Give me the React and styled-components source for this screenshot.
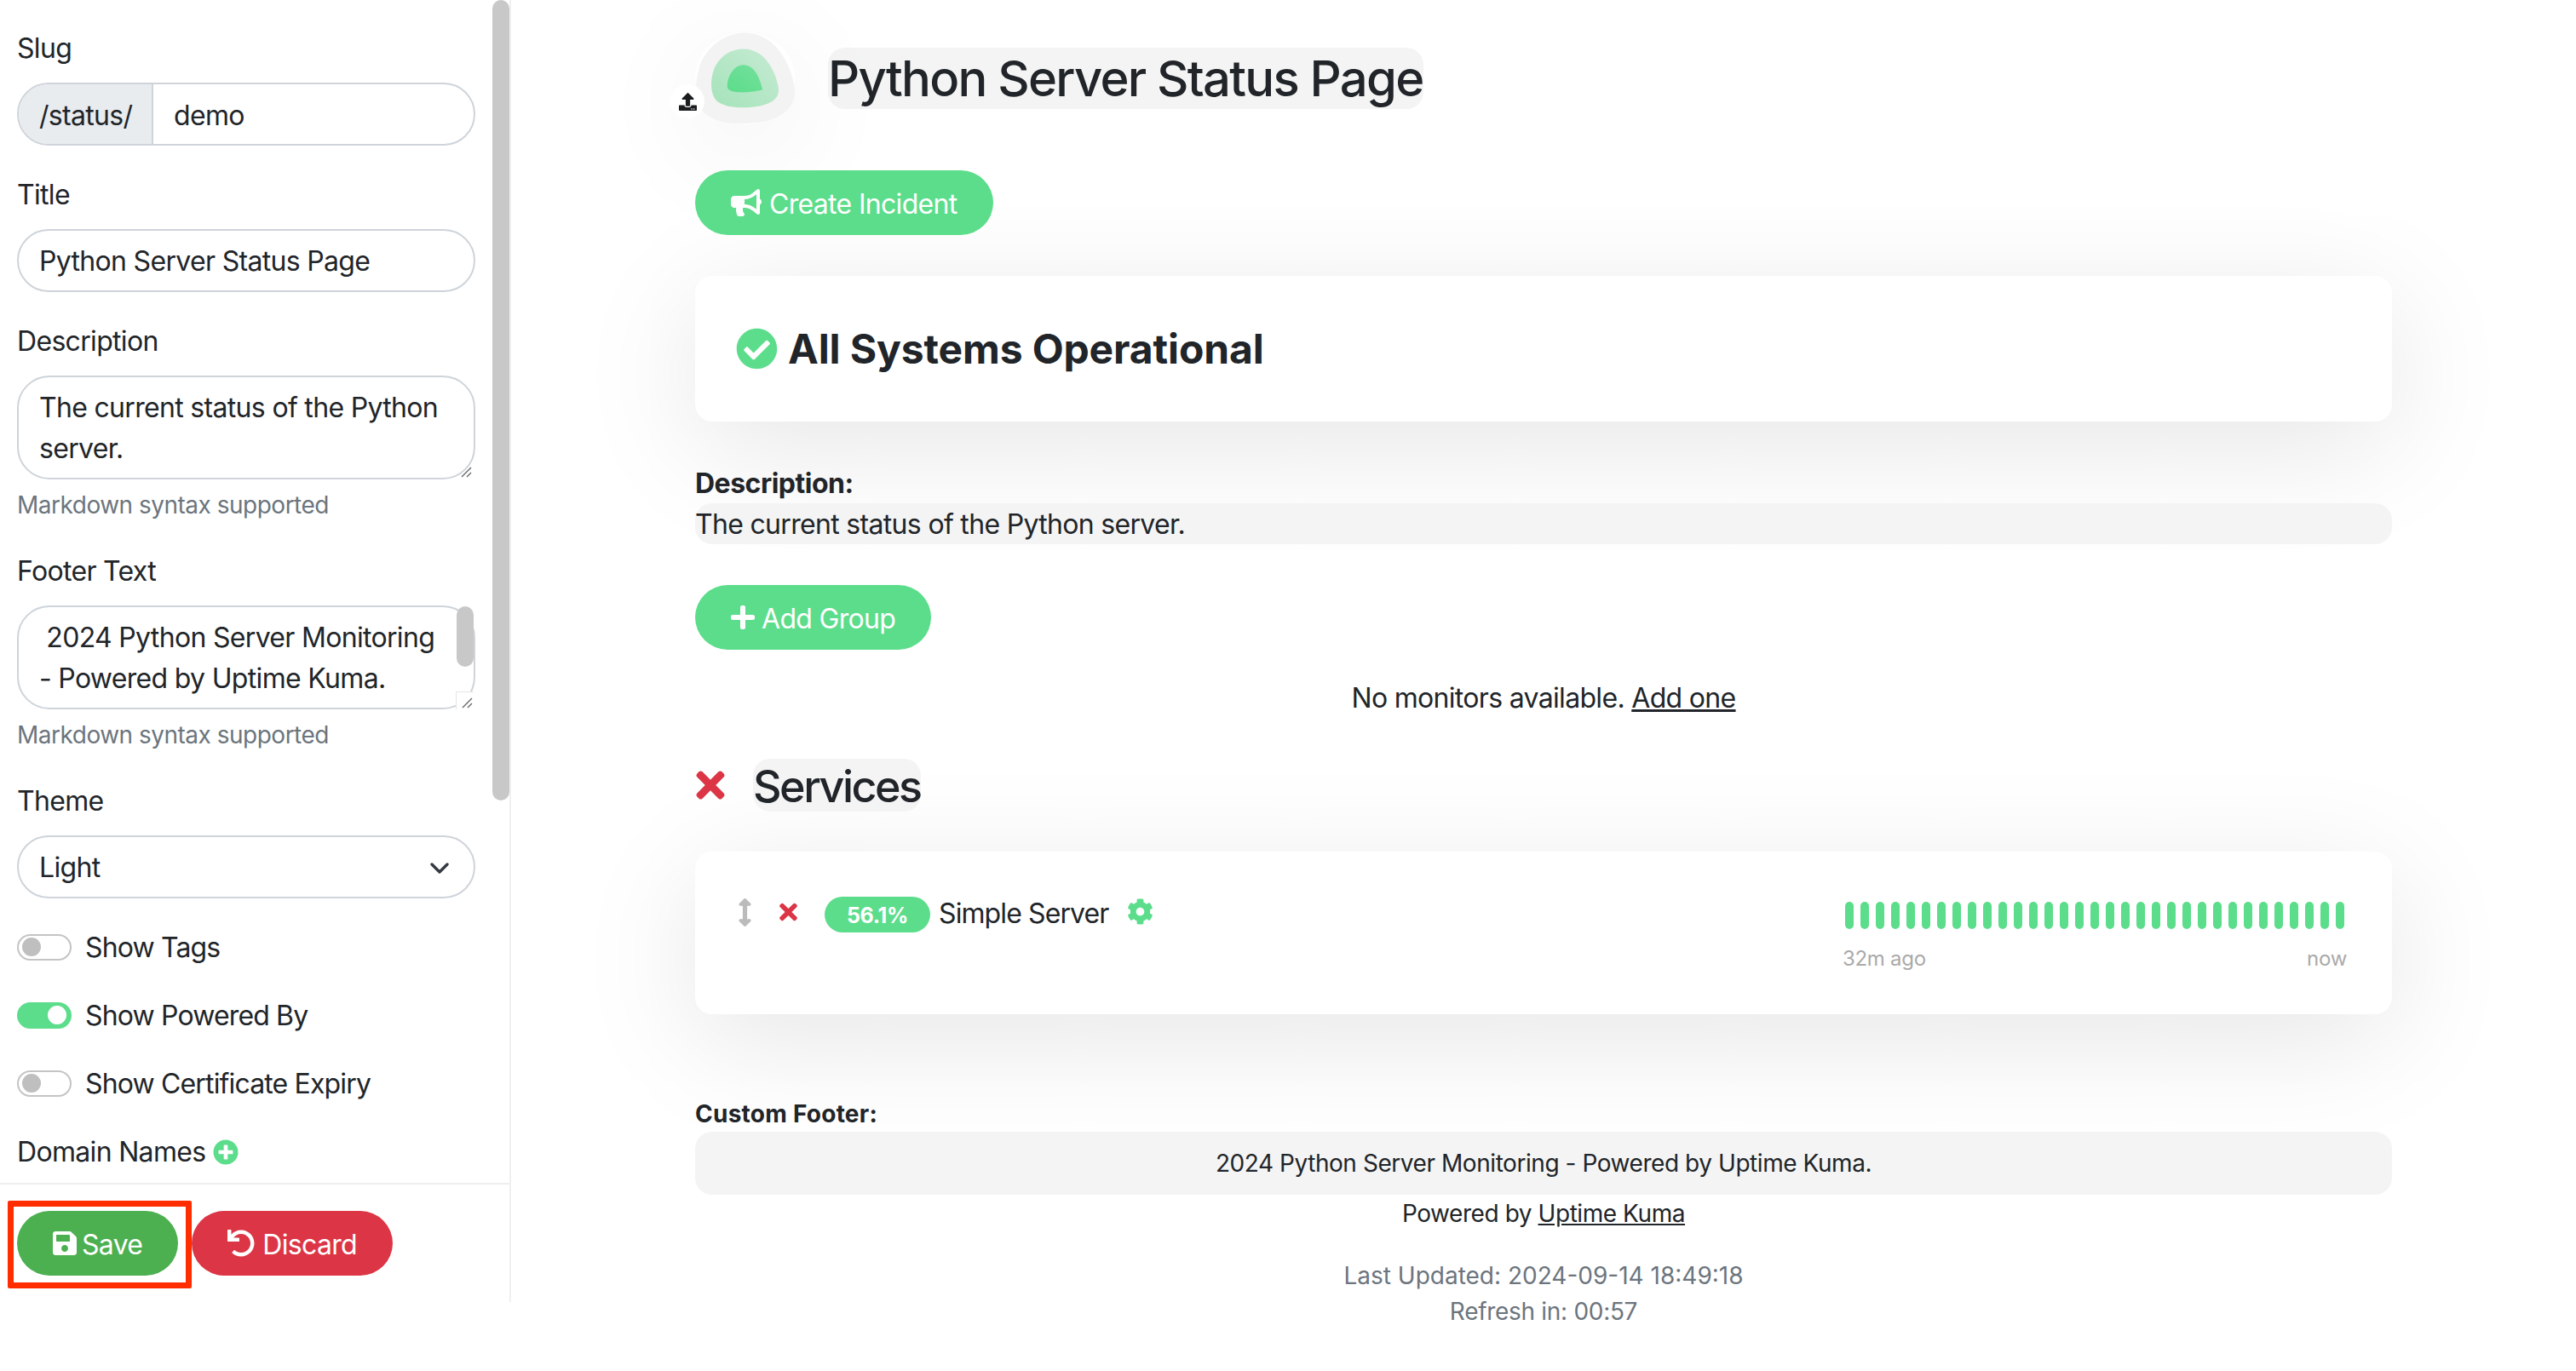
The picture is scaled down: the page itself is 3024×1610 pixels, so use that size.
import React from 'react';
import styled, { createGlobalStyle } from 'styled-components';
import {
  FaArrowsAltV,
  FaBullhorn,
  FaCheckCircle,
  FaCog,
  FaPlus,
  FaPlusCircle,
  FaSave,
  FaTimes,
  FaUndo,
  FaUpload,
} from 'react-icons/fa';

const GREEN = '#5cdd8b';
const RED = '#dc3545';
const INK = '#212529';

const GlobalStyle = createGlobalStyle`
  html, body {
    margin: 0;
    background: #fff;
  }
  body {
    font-family: Inter, "Noto Sans", sans-serif;
    font-size: 32px;
    line-height: 48px;
    letter-spacing: -0.68px;
    color: ${INK};
  }
  * {
    box-sizing: border-box;
  }
`;

const Page = styled.div`
  display: flex;
  width: 3024px;
  height: 1610px;
  overflow: hidden;
  background: #fff;
`;

const Sidebar = styled.aside`
  position: relative;
  flex: 0 0 600px;
  height: 1529px;
  display: flex;
  flex-direction: column;
  border-right: 2px solid #f0f0f0;
`;

const SideForm = styled.div`
  flex: 1;
  padding: 32px 40px 0 20px;
  overflow: hidden;
`;

const Scrollbar = styled.div`
  position: absolute;
  top: 0;
  right: 0;
  width: 20px;
  height: 940px;
  border-radius: 10px;
  background: #c8c8c8;
`;

const Field = styled.div`
  margin-bottom: 33px;
`;

const Label = styled.div`
  padding-top: 1px;
  margin-bottom: ${(p) => (p.$flush ? '0' : '16px')};
  display: flex;
  align-items: center;
  gap: 9px;
`;

const Control = styled.div`
  position: relative;
  display: flex;
  align-items: center;
  justify-content: space-between;
  height: ${(p) => (p.$tall ? '122px' : '74px')};
  padding: ${(p) => (p.$tall ? '12px 24px' : '2px 24px 0')};
  border: 2px solid #ced4da;
  border-radius: ${(p) => (p.$tall ? '38px' : '37px')};
  white-space: pre-wrap;
`;

const SlugGroup = styled.div`
  display: flex;
  height: 74px;
  border: 2px solid #ced4da;
  border-radius: 37px;
  overflow: hidden;
`;

const SlugPrefix = styled.div`
  display: flex;
  align-items: center;
  width: 158px;
  padding: 3px 0 0 24px;
  background: #e9ecef;
  border-right: 2px solid #ced4da;
`;

const SlugValue = styled.div`
  display: flex;
  align-items: center;
  padding: 3px 0 0 24px;
`;

const TallText = styled.div`
  align-self: flex-start;
`;

const Help = styled.div`
  margin: 9px 0 32px;
  font-size: 28px;
  line-height: 42px;
  letter-spacing: -0.5px;
  color: #6c757d;
`;

const InnerScroll = styled.div`
  position: absolute;
  top: -1px;
  right: 0;
  width: 20px;
  height: 71px;
  border-radius: 10px;
  background: #c8c8c8;
`;

const ResizeCorner = styled.div`
  position: absolute;
  right: 0;
  bottom: -2px;
  width: 21px;
  height: 21px;
  border: solid #e6e6e6;
  border-width: ${(p) => (p.$framed ? '1px 0 0 1px' : '0')};
  background: ${(p) => (p.$framed ? '#fff' : 'transparent')};

  svg {
    display: block;
    width: 20px;
    height: 20px;
  }
`;

const ToggleRow = styled.div`
  display: flex;
  align-items: center;
  gap: 16px;
  height: 48px;
  margin-bottom: 32px;
`;

const ToggleText = styled.span`
  margin-top: 2px;
  letter-spacing: -0.85px;
`;

const Toggle = styled.div`
  display: flex;
  align-items: center;
  justify-content: ${(p) => (p.$on ? 'flex-end' : 'flex-start')};
  width: 64px;
  height: 31px;
  padding: 0 4px;
  border-radius: 16px;
  border: 2px solid ${(p) => (p.$on ? GREEN : '#c4c4c4')};
  background: ${(p) => (p.$on ? GREEN : '#fff')};

  &::after {
    content: '';
    width: 22px;
    height: 22px;
    border-radius: 50%;
    background: ${(p) => (p.$on ? '#fff' : '#bfbfbf')};
  }
`;

const SideActions = styled.div`
  position: relative;
  display: flex;
  gap: 16px;
  height: 140px;
  padding: 31px 20px 0;
  border-top: 2px solid #eeeeee;
`;

const Callout = styled.div`
  position: absolute;
  left: 9px;
  top: 19px;
  width: 216px;
  height: 103px;
  border: 7px solid #ff2d00;
  border-radius: 2px;
`;

const Button = styled.div`
  position: relative;
  display: flex;
  align-items: center;
  gap: ${(p) => p.$gap || 9}px;
  height: 76px;
  margin-top: ${(p) => p.$top || 0}px;
  padding: 3px 42px 0;
  border-radius: 38px;
  background: ${(p) => p.$bg || GREEN};
  color: #fff;
  width: fit-content;

  svg {
    width: ${(p) => p.$iconWidth || 32}px;
    height: 32px;
    margin-top: -3px;
  }
`;

const Main = styled.main`
  flex: 1;
  min-width: 0;
  padding: 38px 216px 0;
  overflow: hidden;
`;

const Header = styled.header`
  display: flex;
  align-items: center;
  gap: 39px;
  margin-bottom: 54px;
`;

const LogoWrap = styled.div`
  position: relative;
  width: 117px;
  height: 108px;
  border-radius: 50%;
  box-shadow: 0 30px 140px rgba(0, 0, 0, 0.08);

  svg {
    display: block;
  }
`;

const UploadBadge = styled.div`
  position: absolute;
  left: -29px;
  top: 61px;
  display: flex;
  align-items: center;
  justify-content: center;
  width: 40px;
  height: 40px;
  border-radius: 50%;
  background: #fff;
  font-size: 21px;
  color: #1a1d20;
`;

const Title = styled.h1`
  margin: 0;
  font-size: 58px;
  line-height: 72px;
  font-weight: 550;
  letter-spacing: -1.75px;
  background: #f4f4f4;
  border-radius: 20px;
`;

const Card = styled.section`
  display: flex;
  background: #fff;
  border-radius: 20px;
  box-shadow: 0 30px 140px rgba(0, 0, 0, 0.1);
  margin-top: ${(p) => p.$top || 0}px;
`;

const StatusCard = styled(Card)`
  align-items: center;
  gap: 12px;
  height: 171px;
  padding-left: 48px;
  font-size: 48px;
  font-weight: 700;
  letter-spacing: -0.13px;

  svg {
    color: ${GREEN};
    font-size: 49px;
  }
`;

const StrongLabel = styled.div`
  height: ${(p) => (p.$size ? '42px' : '48px')};
  margin-top: ${(p) => p.$top || 0}px;
  padding-top: ${(p) => (p.$size ? 0 : 1)}px;
  font-weight: 700;
  font-size: ${(p) => p.$size || 32}px;
  line-height: ${(p) => (p.$size ? '42px' : '48px')};
  letter-spacing: ${(p) => (p.$size ? '0.25px' : '-0.5px')};
`;

const Shaded = styled.div`
  height: 48px;
  padding-top: 2px;
  background: #f4f4f4;
  border-radius: 20px;
  line-height: 46px;
`;

const FooterBox = styled(Shaded)`
  height: 74px;
  padding-top: 0;
  display: flex;
  align-items: center;
  justify-content: center;
  font-size: 28px;
  letter-spacing: -0.44px;
`;

const Empty = styled.div`
  margin: 33px 0 47px;
  text-align: center;
`;

const Link = styled.a`
  color: inherit;
  text-decoration: underline;
`;

const GroupHead = styled.div`
  display: flex;
  align-items: center;
  gap: 32px;
  margin-bottom: 47px;

  > svg {
    color: ${RED};
    font-size: 48px;
    width: 36px;
  }
`;

const GroupName = styled.h2`
  margin: 0;
  height: 62px;
  padding-top: 2px;
  font-size: 52px;
  line-height: 62px;
  font-weight: 550;
  letter-spacing: -2.5px;
  background: #f4f4f4;
  border-radius: 20px;
`;

const MonitorCard = styled(Card)`
  justify-content: space-between;
  height: 191px;
  padding: 53px 53px 0 50px;
`;

const MonitorInfo = styled.div`
  display: flex;
  align-items: center;
  height: 42px;
`;

const MonitorName = styled.span`
  margin-bottom: 3px;
  letter-spacing: -0.9px;
`;

const DragIcon = styled(FaArrowsAltV)`
  height: 33px;
  width: 17px;
  margin: 0 31px 6px 0;
  color: #bbb;
`;

const RemoveIcon = styled(FaTimes)`
  font-size: 30px;
  width: 23px;
  margin: 0 31px 6px 0;
  color: ${RED};
`;

const UptimeBadge = styled.div`
  width: 124px;
  height: 42px;
  margin-right: 10px;
  border-radius: 21px;
  background: ${GREEN};
  color: #fff;
  font-size: 25px;
  font-weight: 700;
  line-height: 44px;
  text-align: center;
  letter-spacing: -0.3px;
`;

const GearIcon = styled(FaCog)`
  font-size: 31px;
  margin: 0 0 7px 22px;
  color: ${GREEN};
`;

const BeatColumn = styled.div`
  width: 592px;
  padding-top: 6px;
`;

const BeatBar = styled.div`
  display: flex;
  gap: 8px;
  padding: 0 3px;
`;

const Beat = styled.div`
  width: 10px;
  height: 32px;
  border-radius: 5px;
  background: ${GREEN};
`;

const BeatTimes = styled.div`
  display: flex;
  justify-content: space-between;
  margin-top: 17px;
  font-size: 24px;
  line-height: 36px;
  letter-spacing: -0.3px;
  color: #aaa;
`;

const CenterLine = styled.div`
  text-align: center;
  font-size: 28px;
  line-height: 42px;
  margin-top: ${(p) => p.$top || 0}px;
  letter-spacing: ${(p) => (p.$spacing === undefined ? -0.44 : p.$spacing)}px;
  color: ${(p) => (p.$muted ? '#6c757d' : INK)};
`;

const Chevron = styled.svg`
  margin-right: 5px;
`;

const ResizeGrip = () => (
  <svg viewBox="0 0 20 20" fill="none">
    <path d="M7 18L18 7M13 18l5-5" stroke="#666" strokeWidth="1.4" />
  </svg>
);

const Logo = () => (
  <svg width="117" height="108" viewBox="128 40 350 320">
    <defs>
      <linearGradient id="mid" x1="0" y1="1" x2="1" y2="0">
        <stop offset="0" stopColor="#a5e3ba" />
        <stop offset="1" stopColor="#c6ebd3" />
      </linearGradient>
      <linearGradient id="core" x1="0" y1="1" x2="1" y2="0">
        <stop offset="0" stopColor="#5cdd8b" />
        <stop offset="1" stopColor="#74e09c" />
      </linearGradient>
    </defs>
    <path
      d="M300 40C400 40 460 130 478 235C485 300 430 345 350 355C270 365 190 360 150 310C120 270 130 190 150 140C180 80 240 40 300 40Z"
      fill="#f3f3f3"
    />
    <path
      d="M298 97C370 97 410 170 421 235C425 270 395 290 350 298C290 308 230 302 205 280C178 255 180 195 200 155C220 120 255 97 298 97Z"
      fill="url(#mid)"
    />
    <path
      d="M298 153C335 153 355 195 365 240C340 247 300 252 270 248C245 245 240 235 241 225C243 190 265 153 298 153Z"
      fill="url(#core)"
    />
  </svg>
);

const beats = Array.from({ length: 33 }, (_, i) => i);

export default function App() {
  return (
    <Page>
      <GlobalStyle />
      <Sidebar>
        <Scrollbar />
        <SideForm>
          <Field>
            <Label>Slug</Label>
            <SlugGroup>
              <SlugPrefix>/status/</SlugPrefix>
              <SlugValue>demo</SlugValue>
            </SlugGroup>
          </Field>
          <Field>
            <Label>Title</Label>
            <Control>Python Server Status Page</Control>
          </Field>
          <Label>Description</Label>
          <Control $tall>
            <TallText>The current status of the Python server.</TallText>
            <ResizeCorner>
              <ResizeGrip />
            </ResizeCorner>
          </Control>
          <Help>Markdown syntax supported</Help>
          <Label>Footer Text</Label>
          <Control $tall>
            <TallText>{' 2024 Python Server Monitoring - Powered by Uptime Kuma.'}</TallText>
            <InnerScroll />
            <ResizeCorner $framed>
              <ResizeGrip />
            </ResizeCorner>
          </Control>
          <Help>Markdown syntax supported</Help>
          <Field>
            <Label>Theme</Label>
            <Control>
              Light
              <Chevron width="22" height="14" viewBox="0 0 22 14" fill="none">
                <path d="M2 3l9 9 9-9" stroke="#343a40" strokeWidth="3.4" strokeLinecap="round" strokeLinejoin="round" />
              </Chevron>
            </Control>
          </Field>
          <ToggleRow>
            <Toggle />
            <ToggleText>Show Tags</ToggleText>
          </ToggleRow>
          <ToggleRow>
            <Toggle $on />
            <ToggleText>Show Powered By</ToggleText>
          </ToggleRow>
          <ToggleRow>
            <Toggle />
            <ToggleText>Show Certificate Expiry</ToggleText>
          </ToggleRow>
          <Label $flush>
            Domain Names
            <FaPlusCircle color={GREEN} size={30} />
          </Label>
        </SideForm>
        <SideActions>
          <Callout />
          <Button $bg="#4caf50" $iconWidth={28} $gap={6}>
            <FaSave />
            Save
          </Button>
          <Button $bg={RED}>
            <FaUndo />
            Discard
          </Button>
        </SideActions>
      </Sidebar>

      <Main>
        <Header>
          <LogoWrap>
            <Logo />
            <UploadBadge>
              <FaUpload />
            </UploadBadge>
          </LogoWrap>
          <Title>Python Server Status Page</Title>
        </Header>

        <Button $iconWidth={36}>
          <FaBullhorn />
          Create Incident
        </Button>

        <StatusCard $top={48}>
          <FaCheckCircle />
          All Systems Operational
        </StatusCard>

        <StrongLabel $top={48}>Description:</StrongLabel>
        <Shaded>The current status of the Python server.</Shaded>

        <Button $top={48} $iconWidth={28} $gap={8}>
          <FaPlus />
          Add Group
        </Button>

        <Empty>
          No monitors available. <Link href="#">Add one</Link>
        </Empty>

        <GroupHead>
          <FaTimes />
          <GroupName>Services</GroupName>
        </GroupHead>

        <MonitorCard>
          <MonitorInfo>
            <DragIcon />
            <RemoveIcon />
            <UptimeBadge>56.1%</UptimeBadge>
            <MonitorName>Simple Server</MonitorName>
            <GearIcon />
          </MonitorInfo>
          <BeatColumn>
            <BeatBar>
              {beats.map((b) => (
                <Beat key={b} />
              ))}
            </BeatBar>
            <BeatTimes>
              <span>32m ago</span>
              <span>now</span>
            </BeatTimes>
          </BeatColumn>
        </MonitorCard>

        <StrongLabel $top={96} $size={28}>
          Custom Footer:
        </StrongLabel>
        <FooterBox>2024 Python Server Monitoring - Powered by Uptime Kuma.</FooterBox>
        <CenterLine $top={1}>
          Powered by <Link href="#">Uptime Kuma</Link>
        </CenterLine>
        <CenterLine $muted $top={31} $spacing={0}>
          Last Updated: 2024-09-14 18:49:18
        </CenterLine>
        <CenterLine $muted $spacing={-0.3}>
          Refresh in: 00:57
        </CenterLine>
      </Main>
    </Page>
  );
}
